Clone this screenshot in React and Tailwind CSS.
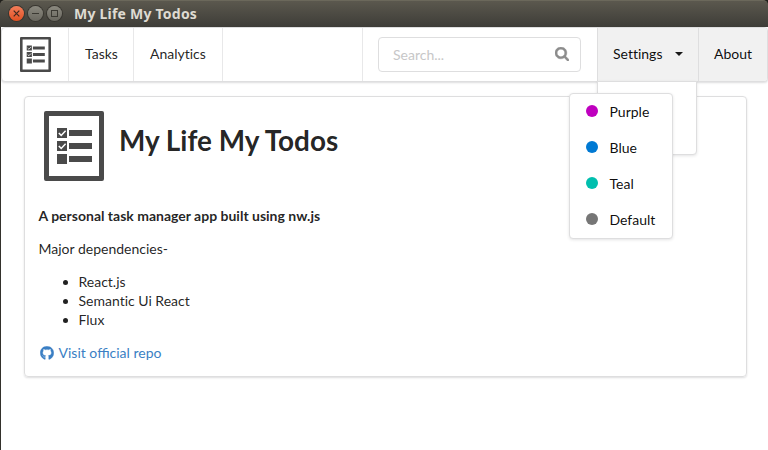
import React from "react";
import { FaGithub } from "react-icons/fa";

const themes = [
  { name: "Purple", dot: "bg-[#bf00bf]" },
  { name: "Blue", dot: "bg-[#0079d3]" },
  { name: "Teal", dot: "bg-[#00bfae]" },
  { name: "Default", dot: "bg-[#767676]" },
];

function ListLogo({ className }) {
  return (
    <svg viewBox="0 0 60 70" preserveAspectRatio="none" className={className} fill="#4a4a4a">
      <path
        fillRule="evenodd"
        d="M2 0H58Q60 0 60 2V68Q60 70 58 70H2Q0 70 0 68V2Q0 0 2 0ZM5 5V65H55V5Z"
      />
      <rect x="13" y="17" width="10" height="10" />
      <rect x="13" y="30" width="10" height="10" />
      <rect x="13" y="43" width="10" height="10" />
      <rect x="25" y="19" width="23" height="6" />
      <rect x="25" y="32" width="23" height="6" />
      <rect x="25" y="45" width="23" height="6" />
      <path
        d="M14.8 22l2.4 2.4 4.4-4.6M14.8 35l2.4 2.4 4.4-4.6"
        fill="none"
        stroke="#fff"
        strokeWidth="1.5"
      />
    </svg>
  );
}

function SearchIcon() {
  return (
    <svg viewBox="64 128 1664 1664" className="h-[14px] w-[14px]" fill="#8c8c8c" stroke="#8c8c8c" strokeWidth="50">
      <path d="M1216 832q0-185-131.500-316.500t-316.500-131.500-316.500 131.500-131.500 316.500 131.500 316.500 316.500 131.500 316.500-131.500 131.500-316.500zm512 832q0 52-38 90t-90 38q-54 0-90-38l-343-342q-179 124-399 124-143 0-273.500-55.500t-225-150-150-225-55.500-273.500 55.500-273.500 150-225 225-150 273.500-55.500 273.500 55.500 225 150 150 225 55.500 273.500q0 220-124 399l343 343q37 37 37 90z" />
    </svg>
  );
}

function TitleBar() {
  return (
    <div className="bg-[#201f1b]">
      <header className="flex h-[27px] items-center rounded-t-[5px] border-t border-[#6b685b] bg-linear-to-b from-[#5b584e] to-[#3e3d38] pb-px pl-[9px]">
        <div className="flex gap-[4px]">
          <span className="flex size-[15px] items-center justify-center rounded-full bg-linear-to-b from-[#f37d59] to-[#e2501f] shadow-[0_0_0_1px_#383630]">
            <svg viewBox="0 0 7 7" className="size-[7px]" stroke="#41291f" strokeWidth="1.2">
              <path d="M.7 .7l5.600 5.600M6.300 .7L.7 6.300" />
            </svg>
          </span>
          <span className="flex size-[15px] items-center justify-center rounded-full bg-linear-to-b from-[#8b897f] to-[#69675f] shadow-[0_0_0_1px_#383630]">
            <span className="h-px w-[7px] bg-[#3b3933]" />
          </span>
          <span className="flex size-[15px] items-center justify-center rounded-full bg-linear-to-b from-[#8b897f] to-[#69675f] shadow-[0_0_0_1px_#383630]">
            <span className="size-[7px] border border-[#3b3933]" />
          </span>
        </div>
        <h1 className="ml-[12px] font-['Noto_Sans',sans-serif] text-[14px] leading-[26px] font-bold tracking-[0.22px] whitespace-nowrap text-[#dfdbd2]">
          My Life My Todos
        </h1>
      </header>
    </div>
  );
}

function SettingsMenu() {
  return (
    <div className="absolute top-[53px] -left-px h-[74px] w-[100px] rounded-b-[4px] border border-[#dededf] bg-white shadow-[0_1px_3px_rgba(34,36,38,0.12)]">
      <ul className="absolute top-[11px] -left-[29px] flex h-[146px] w-[104px] flex-col rounded-[4px] border border-[#dededf] bg-white shadow-[0_1px_3px_rgba(34,36,38,0.12)]">
        {themes.map((t) => (
          <li key={t.name} className="flex h-9 items-center pl-4">
            <span className={"mb-[2px] size-[12px] rounded-full " + t.dot} />
            <span className="ml-[11.500px] pb-[2px]">{t.name}</span>
          </li>
        ))}
      </ul>
    </div>
  );
}

function NavBar() {
  return (
    <nav className="flex h-[55px] rounded-[4px] border border-[#dededf] bg-white shadow-[0_1px_2px_rgba(34,36,38,0.15)]">
      <div className="flex w-[67px] items-center border-r border-[#e8e8e9] pl-[18px]">
        <ListLogo className="h-[35px] w-[31px]" />
      </div>
      <a className="flex w-[65px] items-center border-r border-[#e8e8e9] pb-[2px] pl-4">Tasks</a>
      <a className="flex w-[89px] items-center border-r border-[#e8e8e9] pb-[2px] pl-4">Analytics</a>
      <div className="flex-1" />
      <div className="flex w-[235px] items-center border-l border-[#e8e8e9] pl-[15px]">
        <div className="flex h-[35px] w-[203px] items-center justify-between rounded-[4px] border border-[#dededf] pr-[11px] pl-[14px]">
          <span className="text-[#c7c7c8]">Search...</span>
          <span className="pb-[2px]">
            <SearchIcon />
          </span>
        </div>
      </div>
      <div className="relative z-10 flex w-[101px] items-center border-l border-[#dededf] bg-[#f1f1f1] pl-[15px] text-black/95">
        <span className="w-[50px] pb-[2px]">Settings</span>
        <span className="mb-px ml-[12px] border-x-4 border-t-4 border-x-transparent border-t-black/90" />
        <SettingsMenu />
      </div>
      <a className="flex w-[69px] items-center rounded-r-[3px] border-l border-[#dededf] bg-[#f1f1f1] pb-[2px] pl-[15px] text-black/95">
        About
      </a>
    </nav>
  );
}

export default function App() {
  return (
    <div className="h-[450px] w-[768px] overflow-hidden bg-white font-[Lato,sans-serif] text-[14px] leading-[19px] text-black/87 [font-variant-ligatures:none]">
      <TitleBar />
      <div className="h-[423px] border-l border-[#33312c]">
        <NavBar />
        <main className="mt-[14px] ml-[23px] h-[281px] w-[723px] rounded-[4px] border border-[#dededf] pt-[14px] pl-[13.5px] shadow-[0_1px_2px_rgba(34,36,38,0.15)]">
          <div className="flex h-[70px] pl-[5.5px]">
            <ListLogo className="h-[70px] w-[60px]" />
            <h2 className="ml-[15px] pt-[11px] text-[27.900px] leading-[36px] font-bold">My Life My Todos</h2>
          </div>
          <p className="mt-[25px] font-bold">A personal task manager app built using nw.js</p>
          <p className="mt-[14px]">Major dependencies-</p>
          <ul className="mt-[14px] list-disc pl-10">
            <li>React.js</li>
            <li>Semantic Ui React</li>
            <li>Flux</li>
          </ul>
          <a className="mt-[14px] flex items-center text-[#3a7fc4] [font-variant-ligatures:normal]">
            <FaGithub className="mr-[4.500px] ml-[1.5px] size-[14px]" stroke="currentColor" strokeWidth="10" />
            Visit official repo
          </a>
        </main>
      </div>
    </div>
  );
}
